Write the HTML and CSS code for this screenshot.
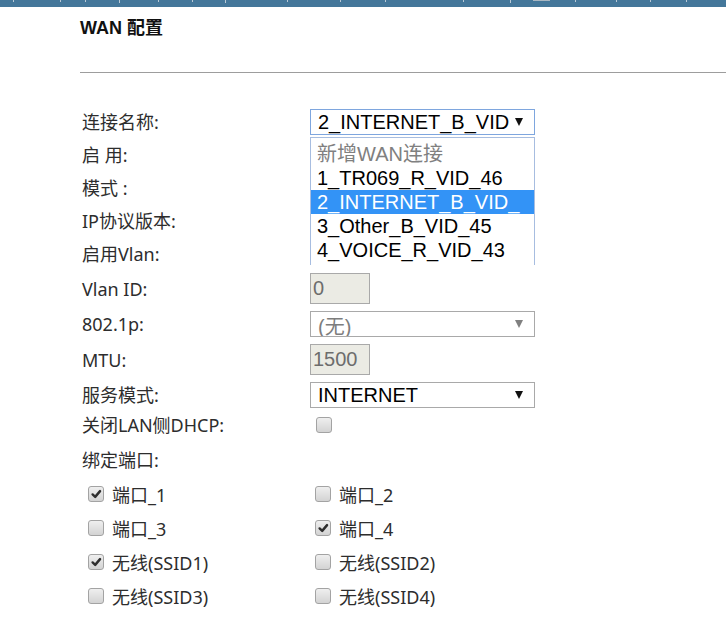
FILE: index.html
```html
<!DOCTYPE html>
<html lang="zh-CN">
<head>
<meta charset="utf-8">
<title>WAN 配置</title>
<link rel="stylesheet" href="styles.css">
</head>
<body>
<div class="topbar"></div>
<main class="page">
  <h1 class="title">WAN 配置</h1>
  <hr class="rule">
  <div class="form">
    <div class="row">
      <div class="label">连接名称:</div>
      <div class="select select-focus"><span class="sel-text">2_INTERNET_B_VID</span><span class="arrow"></span></div>
    </div>
    <div class="row"><div class="label">启 用:</div></div>
    <div class="row"><div class="label">模式 :</div></div>
    <div class="row"><div class="label">IP协议版本:</div></div>
    <div class="row"><div class="label">启用Vlan:</div></div>
    <div class="row row-37">
      <div class="label">Vlan ID:</div>
      <div class="input">0</div>
    </div>
    <div class="row row-34">
      <div class="label">802.1p:</div>
      <div class="select select-disabled"><span class="sel-text sel-low">(无)</span><span class="arrow arrow-gray"></span></div>
    </div>
    <div class="row row-37">
      <div class="label">MTU:</div>
      <div class="input">1500</div>
    </div>
    <div class="row row-34">
      <div class="label">服务模式:</div>
      <div class="select"><span class="sel-text">INTERNET</span><span class="arrow"></span></div>
    </div>
    <div class="row row-26">
      <div class="label">关闭LAN侧DHCP:</div>
      <span class="cb cb-dhcp"></span>
    </div>
    <div class="row row-bind">
      <div class="label">绑定端口:</div>
    </div>
    <div class="ports">
      <label class="port"><span class="cb"><svg viewBox="0 0 15 15" width="13" height="13"><path d="M3 7.4 L6 10.2 L11.6 3.6" fill="none" stroke="#2e2e2e" stroke-width="2.8" stroke-linecap="round" stroke-linejoin="round"/></svg></span>端口_1</label>
      <label class="port"><span class="cb"></span>端口_2</label>
      <label class="port"><span class="cb"></span>端口_3</label>
      <label class="port"><span class="cb"><svg viewBox="0 0 15 15" width="13" height="13"><path d="M3 7.4 L6 10.2 L11.6 3.6" fill="none" stroke="#2e2e2e" stroke-width="2.8" stroke-linecap="round" stroke-linejoin="round"/></svg></span>端口_4</label>
      <label class="port"><span class="cb"><svg viewBox="0 0 15 15" width="13" height="13"><path d="M3 7.4 L6 10.2 L11.6 3.6" fill="none" stroke="#2e2e2e" stroke-width="2.8" stroke-linecap="round" stroke-linejoin="round"/></svg></span>无线(SSID1)</label>
      <label class="port"><span class="cb"></span>无线(SSID2)</label>
      <label class="port"><span class="cb"></span>无线(SSID3)</label>
      <label class="port"><span class="cb"></span>无线(SSID4)</label>
    </div>
    <div class="list">
      <div class="opt opt-muted">新增WAN连接</div>
      <div class="opt">1_TR069_R_VID_46</div>
      <div class="opt opt-active">2_INTERNET_B_VID_</div>
      <div class="opt">3_Other_B_VID_45</div>
      <div class="opt">4_VOICE_R_VID_43</div>
    </div>
  </div>
</main>
</body>
</html>
```
FILE: styles.css
```css
* { box-sizing: border-box; }

body {
  margin: 0;
  background: #fff;
  font-family: "Noto Sans", "Noto Sans CJK SC", sans-serif;
  color: #2d2d2d;
}

.topbar {
  height: 7px;
  background:
    linear-gradient(#b9c9d6, #b9c9d6) 13px 0 / 1px 2px no-repeat,
    linear-gradient(#b9c9d6, #b9c9d6) 60px 0 / 1px 2px no-repeat,
    linear-gradient(#b9c9d6, #b9c9d6) 85px 0 / 1px 2px no-repeat,
    linear-gradient(#b9c9d6, #b9c9d6) 119px 0 / 1px 3px no-repeat,
    linear-gradient(#b9c9d6, #b9c9d6) 158px 0 / 1px 2px no-repeat,
    linear-gradient(#b9c9d6, #b9c9d6) 192px 0 / 1px 2px no-repeat,
    linear-gradient(#b9c9d6, #b9c9d6) 225px 0 / 1px 3px no-repeat,
    linear-gradient(#b9c9d6, #b9c9d6) 287px 0 / 1px 2px no-repeat,
    linear-gradient(#b9c9d6, #b9c9d6) 340px 0 / 1px 2px no-repeat,
    linear-gradient(#b9c9d6, #b9c9d6) 385px 0 / 1px 2px no-repeat,
    linear-gradient(#b9c9d6, #b9c9d6) 463px 0 / 1px 2px no-repeat,
    linear-gradient(#b9c9d6, #b9c9d6) 510px 0 / 1px 3px no-repeat,
    linear-gradient(#a9b7c2, #a9b7c2) 533px 0 / 17px 1px no-repeat,
    linear-gradient(#b9c9d6, #b9c9d6) 575px 0 / 1px 2px no-repeat,
    linear-gradient(#b9c9d6, #b9c9d6) 616px 0 / 1px 2px no-repeat,
    linear-gradient(#b9c9d6, #b9c9d6) 650px 0 / 1px 2px no-repeat,
    linear-gradient(#b9c9d6, #b9c9d6) 686px 0 / 1px 2px no-repeat,
    #44779a;
}

.page {
  padding-left: 80px;
}

.title {
  margin: 10px 0 0;
  font-family: "Liberation Sans", "Noto Sans CJK SC", sans-serif;
  font-size: 18px;
  line-height: 22px;
  font-weight: bold;
  color: #111;
}

.rule {
  margin: 33px 0 0;
  height: 0;
  border: 0;
  border-top: 1px solid #9d9d9d;
}

.form {
  position: relative;
  margin-top: 32px;
}

.row {
  display: flex;
  align-items: center;
  height: 33px;
}
.row-37 { height: 37px; }
.row-34 { height: 34px; }
.row-26 { height: 26px; }
.row-bind { height: 39px; padding-top: 5px; }

.label {
  flex: none;
  width: 230px;
  padding-left: 2px;
  font-size: 18px;
  line-height: 24px;
  color: #2d2d2d;
  white-space: nowrap;
}

.select {
  display: flex;
  align-items: center;
  width: 225px;
  height: 26px;
  padding-left: 7px;
  border: 1px solid #a9a9a9;
  background: #fff;
  font-family: "Liberation Sans", "Noto Sans CJK SC", sans-serif;
  font-size: 20px;
  color: #000;
  overflow: hidden;
}
.select-focus { border-color: #7ea6de; }
.select-disabled { color: #7d7d7d; }

.sel-text {
  flex: 1;
  min-width: 0;
  white-space: nowrap;
  line-height: 24px;
}
.sel-low { padding-top: 6px; }

.arrow {
  flex: none;
  width: 0;
  height: 0;
  margin: 0 11px 0 8px;
  border-left: 4px solid transparent;
  border-right: 4px solid transparent;
  border-top: 8px solid #111;
}
.arrow-gray { border-top-color: #808080; }

.input {
  display: flex;
  align-items: center;
  width: 60px;
  height: 31px;
  padding-left: 2px;
  border: 1px solid #a9a9a9;
  background: #ebebe4;
  font-family: "Liberation Sans", sans-serif;
  font-size: 20px;
  color: #6d6d6d;
}

.cb {
  flex: none;
  display: inline-flex;
  align-items: center;
  justify-content: center;
  width: 16px;
  height: 16px;
  border: 1px solid #a3a3a3;
  border-radius: 3px;
  background: linear-gradient(#efefef, #d3d3d3);
}
.cb-dhcp { margin-left: 6px; }

.ports {
  display: grid;
  grid-template-columns: 227px 1fr;
  grid-auto-rows: 34px;
  padding-left: 8px;
}

.port {
  display: flex;
  align-items: center;
  gap: 8px;
  font-size: 18px;
  color: #2d2d2d;
}

.list {
  position: absolute;
  top: 32px;
  left: 230px;
  width: 225px;
  height: 128px;
  padding-top: 4px;
  border: 1px solid #a7bde0;
  border-bottom: 0;
  background: #fff;
  overflow: hidden;
  font-family: "Liberation Sans", "Noto Sans CJK SC", sans-serif;
  font-size: 20px;
  color: #000;
}

.opt {
  height: 24px;
  line-height: 24px;
  padding-left: 6px;
  white-space: nowrap;
}
.opt-muted { color: #808080; }
.opt-active { background: #3393f6; color: #fff; }
```
